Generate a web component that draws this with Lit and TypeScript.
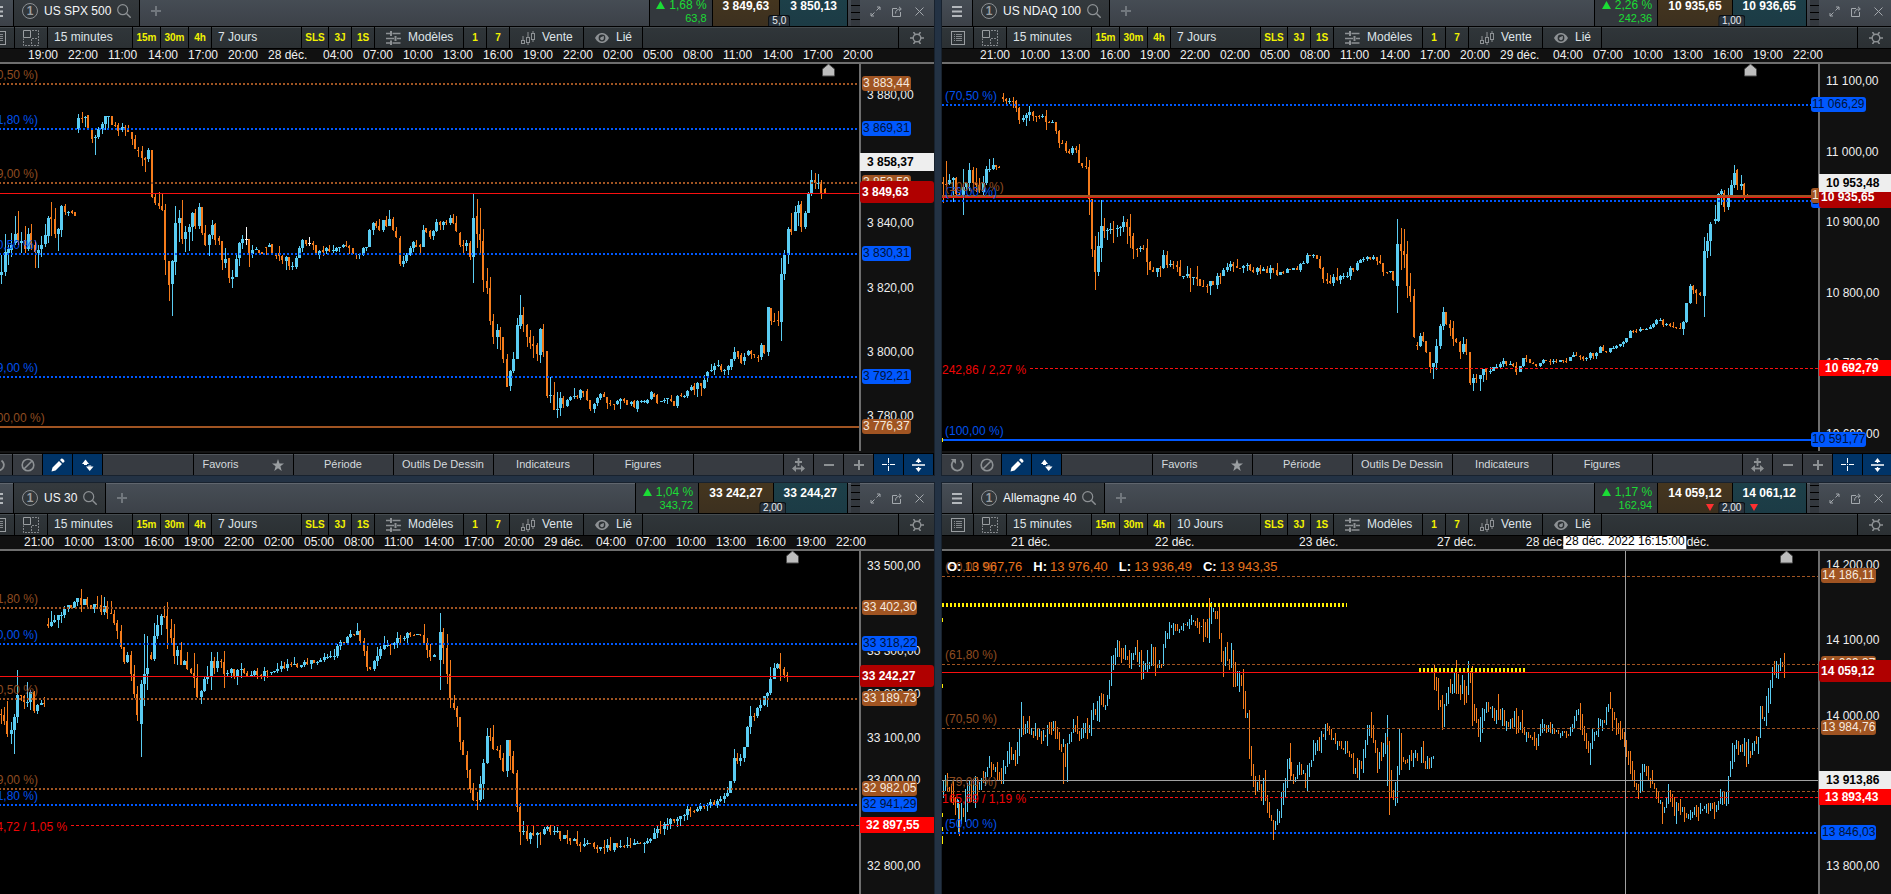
import { LitElement, html, svg, css, nothing } from "lit";
import { customElement, property } from "lit/decorators.js";
import { classMap } from "lit/directives/class-map.js";
import { styleMap } from "lit/directives/style-map.js";

type Tone = "brown" | "blue" | "red" | "grey" | "yellow";
type Kind = "dot" | "solid" | "thin" | "dash" | "thick" | "block";
interface Candle { x: number; hi: number; lo: number; top: number; bot: number; c: string }
interface Level { y: number; tone: Tone; kind: Kind; label?: string; labelY?: number; from?: number; to?: number; tag?: string; inset?: boolean }
interface Tag { y: number; text: string; look: "live" | "white" | "stop" }
interface Panel {
  name: string; change: string; points: string; sell: string; buy: string; spread: string; falling?: boolean;
  range: string; pad: number; times: [string, number][]; ox: number; oy: number;
  candles: Candle[]; thin?: boolean; levels: Level[]; ticks: [number, string][]; tags: Tag[];
  marker: number; cross?: { x: number; y: number; date: string }; ohlc?: [string, string][]; marks?: [number, number][];
}

/* Recorded bars: x high low bodyTop bodyBottom colour, in thirds of a pixel. */
const SPX_BARS = `4 375 462 426 435 b|16 312 438 366 426 b|25 345 405 358 368 b|34 310 382 345 360 b|46 258 345 312 340 b|55 243 345 310 335 o|64 306 370 333 339 b|76 288 370 330 357 o|85 294 362 312 357 b|94 282 360 310 345 o|106 330 414 345 366 o|115 345 414 360 369 b|124 318 381 345 357 b|136 282 351 315 342 b|145 258 339 264 318 b|154 216 318 261 267 o|166 234 324 267 312 o|175 294 363 297 312 b|184 225 321 228 300 b|196 222 255 228 246 o|205 243 258 246 249 b|217 240 252 243 249 o|226 246 258 246 258 o|235 -48 9 -36 -3 b|247 -54 -21 -37 -33 o|256 -42 -9 -40 -36 b|265 -45 0 -45 -5 o|277 0 40 0 27 o|286 15 75 21 24 b|295 -10 27 -3 22 b|307 -24 12 -18 -2 b|316 -42 0 -42 -18 b|325 -42 -4 -41 -38 b|337 -42 -15 -42 -15 o|346 -24 -10 -15 -11 o|355 -22 18 -14 2 o|367 -21 6 -8 0 b|376 -15 18 -8 -3 o|385 -15 7 0 7 o|397 6 45 6 27 o|406 15 57 27 57 o|415 51 81 60 63 o|427 48 108 63 84 o|436 81 126 84 90 o|446 54 96 60 87 b|457 60 204 60 200 o|466 192 225 201 219 o|478 186 237 219 228 o|487 190 243 228 240 o|496 222 435 240 390 o|508 393 513 393 465 o|517 390 558 393 462 b|526 228 435 279 396 b|538 240 336 264 279 b|547 210 342 264 327 o|556 288 366 306 327 b|568 282 363 291 306 b|577 246 333 249 291 b|586 237 297 249 288 o|598 219 297 231 288 b|607 231 315 231 309 o|616 285 348 309 345 o|628 312 378 315 345 b|637 270 327 285 315 b|646 279 345 282 330 o|658 318 345 324 333 o|667 333 420 333 390 o|676 354 414 387 399 b|688 384 459 384 444 o|697 420 474 441 447 b|709 375 441 387 441 b|718 336 408 339 384 b|727 315 357 327 339 b|739 291 345 327 330 w|748 327 411 327 375 o|757 345 384 360 372 b|769 351 360 357 360 b|778 360 369 360 369 o|787 366 372 366 372 o|799 351 375 351 354 o|808 339 351 345 351 b|817 342 375 342 372 o|829 375 387 375 378 o|838 348 393 370 378 o|847 375 402 378 390 o|859 378 420 381 393 b|868 380 420 381 408 o|877 396 420 408 411 b|889 378 417 384 411 b|898 348 384 354 384 b|907 327 366 330 354 b|919 330 348 330 342 o|928 321 348 339 342 w|940 333 360 339 345 o|949 345 372 345 369 o|958 360 387 363 375 b|970 348 378 360 366 o|979 351 372 354 363 b|988 345 366 357 363 o|1000 345 369 360 363 b|1009 351 366 354 363 b|1018 351 366 352 355 b|1030 342 354 345 351 b|1039 333 351 345 348 o|1048 345 372 348 354 o|1060 354 372 354 369 o|1069 372 387 372 375 o|1078 372 387 373 376 b|1090 351 378 354 375 b|1099 350 363 351 354 b|1108 297 351 300 351 b|1120 276 315 279 300 b|1129 273 294 279 288 o|1138 267 303 288 300 o|1150 270 306 270 300 b|1159 258 291 270 288 o|1168 240 288 267 288 b|1180 261 303 267 300 o|1189 291 324 303 321 o|1201 318 408 324 402 o|1210 378 411 393 402 b|1219 369 399 375 393 b|1231 348 378 354 375 b|1240 333 366 336 354 b|1249 330 352 345 351 o|1261 342 369 345 351 o|1270 285 351 300 351 b|1279 294 309 294 306 o|1291 300 327 303 321 o|1300 300 330 303 318 b|1309 267 306 276 303 b|1321 273 300 276 285 o|1330 273 300 276 285 b|1339 270 286 276 280 o|1351 255 285 264 279 b|1360 252 282 264 279 o|1369 258 306 279 303 o|1381 306 351 309 345 o|1390 330 369 345 348 o|1399 330 363 339 348 b|1411 333 390 339 381 o|1420 192 459 264 381 b|1432 207 354 258 312 o|1441 234 369 312 330 o|1450 297 486 333 450 o|1462 414 492 453 474 o|1471 441 585 474 573 o|1480 552 642 573 621 o|1492 582 657 600 621 b|1501 591 660 600 621 o|1510 621 699 621 687 o|1522 672 771 687 771 o|1531 720 783 723 768 b|1540 666 729 687 723 b|1552 564 687 585 687 b|1561 495 597 555 588 b|1570 531 606 555 582 o|1582 582 651 585 621 o|1591 600 657 621 639 o|1600 618 684 642 648 o|1612 639 693 645 672 o|1621 594 699 597 675 b|1630 582 681 597 666 o|1642 663 804 663 798 o|1651 741 819 795 798 b|1663 756 840 795 840 o|1672 786 864 837 840 b|1681 786 858 804 834 b|1690 798 834 804 822 o|1702 807 831 810 828 b|1711 798 813 801 810 b|1723 774 807 798 801 b|1732 795 807 798 801 o|1741 777 810 780 804 b|1750 783 801 783 789 o|1762 777 813 783 810 o|1771 810 843 810 837 o|1783 819 849 822 837 b|1792 801 828 804 819 b|1801 789 810 792 804 b|1813 786 801 793 801 o|1822 801 837 801 819 o|1831 810 828 819 822 o|1843 822 840 822 825 o|1852 810 825 813 822 b|1861 804 837 807 813 b|1873 804 819 807 813 o|1882 810 825 810 825 o|1894 813 828 816 822 b|1903 810 834 813 831 o|1912 810 846 813 837 b|1924 810 819 813 816 b|1933 811 819 813 816 b|1942 807 822 810 819 b|1954 783 810 786 807 b|1963 789 801 792 801 o|1972 792 822 795 819 o|1984 812 817 813 816 b|1993 804 819 810 813 b|2002 804 822 805 808 b|2014 795 816 808 814 o|2023 813 828 813 828 o|2032 795 834 798 828 b|2044 789 801 795 798 o|2053 795 804 798 801 b|2062 780 804 783 798 b|2074 765 783 771 780 b|2083 759 795 768 780 o|2092 756 801 759 777 b|2104 759 798 759 768 o|2113 735 777 750 774 b|2122 723 756 726 738 b|2134 702 726 720 723 b|2143 699 735 708 720 b|2155 690 711 705 708 b|2164 702 726 708 720 o|2173 717 735 719 722 b|2185 705 735 708 720 b|2194 687 720 687 711 b|2203 651 693 666 687 b|2215 663 687 663 681 o|2224 669 702 675 699 o|2233 669 705 681 693 b|2245 660 678 663 675 b|2254 660 687 663 672 o|2263 672 684 672 675 o|2275 675 696 681 684 o|2284 639 690 645 681 b|2293 645 672 645 669 o|2305 531 678 531 666 b|2314 534 585 534 573 o|2323 549 576 573 576 o|2335 543 588 570 573 o|2344 384 633 432 576 b|2353 360 450 375 432 b|2365 291 402 297 375 b|2374 249 315 297 306 o|2386 228 303 246 303 b|2395 213 288 225 249 b|2404 213 306 222 291 o|2416 243 297 249 291 b|2425 186 249 189 249 b|2434 120 198 150 189 b|2446 129 177 150 159 o|2455 132 177 159 162 b|2464 150 207 162 189 o|2476 174 189 177 189 o`;

function recorded(src: string): Candle[] {
  const y = (v: string) => Math.round(130 + Number(v) / 3);
  return src.split("|").map((row) => {
    const [x, hi, lo, top, bot, c] = row.split(" ");
    return { x: Math.floor(Number(x) / 3), hi: y(hi), lo: y(lo), top: y(top), bot: y(bot), c };
  });
}

/* Bars walked along a path of "x,y,swing" points; the swing carries on until changed. */
function walk(src: string, step: number, seed: number): Candle[] {
  let s = seed;
  const rnd = () => ((s = (s * 1103515245 + 12345) % 2147483648) / 2147483648);
  let swing = 3;
  const pts = src.trim().split(/\s+/).map((p) => {
    const [x, y, w] = p.split(",").map(Number);
    if (w) swing = w;
    return { x, y, w: swing };
  });
  const out: Candle[] = [];
  let k = 0;
  let prev = pts[0].y;
  for (let x = pts[0].x; x <= pts[pts.length - 1].x; x += step) {
    while (k < pts.length - 2 && pts[k + 1].x < x) k++;
    const a = pts[k], b = pts[k + 1];
    const t = Math.min(1, (x - a.x) / (b.x - a.x));
    const close = a.y + (b.y - a.y) * t + (rnd() - 0.5) * a.w * 1.6;
    const top = Math.round(Math.min(prev, close)), bot = Math.max(top + 1, Math.round(Math.max(prev, close)));
    out.push({
      x: Math.floor(x), top, bot,
      hi: Math.round(top - rnd() * rnd() * a.w * 2.4), lo: Math.round(bot + rnd() * rnd() * a.w * 2.4),
      c: close > prev ? "o" : "b",
    });
    prev = close;
  }
  return out;
}
const bar = (x: number, hi: number, lo: number, top: number, bot: number, c: string): Candle => ({ x, hi, lo, top, bot, c });
const STEP = 10 / 3;

const NDAQ = [
  ...walk("943,182,12 950,186 958,190 965,180 970,172 975,188 980,190 985,176,7 990,167 995,166,2 1000,167", STEP, 7),
  ...walk("1003,97,5 1007,98 1013,100 1017,110 1020,122 1024,121 1030,112 1036,113 1040,119 1047,120 1053,124 1057,136 1060,142 1066,148 1070,153 1075,146 1078,155,7 1087,168 1090,200 1093,250,9", STEP, 21),
  bar(1095, 236, 290, 250, 272, "o"), bar(1098, 232, 276, 246, 272, "b"), bar(1101, 200, 262, 226, 248, "b"),
  ...walk("1104,226,11 1107,223 1116,229 1124,229 1134,241,8 1146,256 1155,278 1164,258 1182,271,6 1206,284 1215,284 1224,267,4 1254,269 1278,272 1296,268 1308,256 1318,258 1325,284 1333,280 1345,275 1357,265 1371,257,3 1380,260 1384,272 1391,271 1395,286", STEP, 21),
  bar(1397, 219, 313, 244, 286, "b"), bar(1401, 228, 270, 244, 251, "o"), bar(1404, 229, 268, 251, 255, "o"), bar(1407, 241, 298, 254, 286, "o"), bar(1410, 273, 302, 286, 296, "o"), bar(1414, 289, 338, 296, 337, "o"),
  ...walk("1417,345,6 1421,339 1427,350 1431,372 1434,359 1438,347 1441,317 1444,308 1447,322 1451,332 1456,340 1461,351 1465,341 1467,355,5 1470,380 1474,375,6 1478,382 1481,377 1485,369,5 1490,375 1495,367,2 1505,362 1511,365 1517,371 1524,358 1531,363 1538,366 1545,360 1565,362 1575,355 1582,360 1590,355 1597,354 1600,348 1605,352 1612,348 1622,344 1630,332 1640,329 1652,328 1658,318 1663,325,3 1668,326 1675,328 1681,330 1685,317 1690,287 1695,292,5 1701,296", STEP, 5),
  bar(1704, 237, 317, 251, 296, "b"), bar(1707, 233, 258, 241, 251, "b"), bar(1710, 222, 256, 224, 241, "b"), bar(1715, 205, 224, 219, 221, "b"), bar(1718, 193, 222, 194, 221, "b"), bar(1721, 189, 205, 191, 194, "b"), bar(1724, 190, 212, 193, 207, "o"), bar(1728, 188, 210, 196, 207, "b"), bar(1731, 180, 197, 185, 196, "b"), bar(1734, 165, 188, 173, 185, "b"), bar(1737, 169, 190, 170, 185, "o"), bar(1741, 175, 190, 184, 186, "b"), bar(1744, 183, 200, 184, 195, "o"), bar(1747, 194, 198, 195, 197, "o"),
];

const US30 = [
  ...walk("1,714,12 6,732 12,736 16,712 20,694 26,708 31,700 37,706,4 45,705", STEP, 3),
  ...walk("48,624,8 54,616 60,612 70,604 80,600,6 90,608 100,606 109,612 118,630 122,655,9 130,662 133,690 139,720", STEP, 11),
  bar(141, 680, 757, 684, 724, "b"), bar(144, 634, 706, 674, 684, "b"), bar(147, 636, 690, 668, 674, "b"),
  ...walk("151,655,11 154,639 161,621 169,625 175,657 187,661 199,693,9 211,665 229,672,5 259,675,4 283,666 307,663 332,657 344,639,5 358,633 369,669 386,645 404,634 422,633 430,658 437,657", STEP, 17),
  bar(440, 613, 690, 632, 660, "b"), bar(443, 628, 664, 632, 648, "o"), bar(447, 634, 684, 648, 674, "o"), bar(450, 660, 708, 674, 698, "o"),
  ...walk("454,703,8 464,754 473,802 480,790 488,736 496,748 504,768 508,742 512,760 515,784 519,824 524,832 531,836 543,826,5 555,834 567,838,4 579,844 603,848 627,844 645,846 663,826 681,814 705,806 724,798 730,790 733,760,5 743,754 748,721 760,707,6 766,694 774,664 781,669 790,676", STEP, 29),
];

const DAX_EARLY = "10,580,30 19,530 30,570 45,610 60,660 75,610 88,560 98,620 110,560,22 130,530 148,490 160,520 175,510 188,540 200,500 210,455 225,465 239,400 240,370 262,380 280,405,16 290,400 308,420 325,390 340,375 352,405 370,450,28 372,530 380,440 395,380 410,380 427,405 445,365 460,350 480,300 492,310 505,280 512,190 525,145,26 540,170 560,160 572,170 583,150 600,180 614,210 622,170 640,175 658,195 668,170 672,110 680,90,18 695,75 712,98 730,72,10 760,58 780,85,28 800,115 808,50 815,10 825,30 835,90 845,180 857,150 866,185 878,195 888,255,24 900,230 912,320 922,360 930,480 938,550 955,570 970,570 980,610 1000,680 1012,650 1030,570 1045,500,24 1060,520 1080,500,16 1100,550 1110,500 1125,440 1140,430 1157,385 1170,405,12 1185,430 1205,440 1230,460,24 1240,520 1255,500 1265,510 1275,430 1290,390 1300,430,18 1312,490 1330,455 1341,400 1345,540,36 1360,600 1368,620 1376,480 1382,440 1395,480,18 1420,470 1438,490"
  .split(" ").map((p) => p.split(",").map(Number)).map(([x, y, w]) => `${940 + x / 3},${600 + y / 3}${w ? "," + w / 3 : ""}`).join(" ");
const DAX = [
  ...walk(DAX_EARLY, 2, 41),
  bar(958, 800, 832, 815, 826, "b"), bar(1063, 753, 784, 760, 776, "o"), bar(1209, 598, 618, 603, 615, "o"), bar(1211, 602, 622, 603, 615, "b"), bar(1290, 743, 780, 750, 776, "o"), bar(1387, 715, 786, 720, 780, "b"),
  ...walk("1421,760,8 1427,768 1433,756", 2, 4),
  ...walk("1434,677,9 1439,700 1442,724 1446,700 1453,681 1459,684 1464,691 1469,677 1471,703 1479,734 1483,710 1491,715 1498,715,7 1508,726 1514,719 1524,731,5 1536,743 1542,726 1553,734,3 1561,730 1568,738 1574,717,7 1579,715 1583,741 1588,749 1594,731 1604,717 1608,705 1613,722 1619,729 1623,741 1627,762 1631,776 1637,795 1643,767 1651,783 1656,795 1661,807 1668,796 1675,809 1681,807,5 1686,817 1696,812 1704,805 1714,809 1722,790,8 1726,807 1729,771 1734,750 1739,752 1743,745 1746,757 1753,748 1758,736 1759,710 1764,715 1768,686 1771,674,6 1776,672 1780,661 1784,671", 2, 77),
];

const clock = (list: string, gap: number): [string, number][] => list.split(" ").map((t) => (t.endsWith("déc.") ? [t.replace("_", " "), gap] : [t, 40]));
const LATER = "21:00 10:00 13:00 16:00 19:00 22:00 02:00 05:00 08:00 11:00 14:00 17:00 20:00 29_déc. 04:00 07:00 10:00 13:00 16:00 19:00 22:00";

const PANELS: Panel[] = [
  {
    name: "US SPX 500", change: "1,68 %", points: "63,8", sell: "3 849,63", buy: "3 850,13", spread: "5,0", range: "7 Jours",
    pad: 45, times: clock("19:00 22:00 11:00 14:00 17:00 20:00 28_déc. 04:00 07:00 10:00 13:00 16:00 19:00 22:00 02:00 05:00 08:00 11:00 14:00 17:00 20:00", 55),
    ox: -17, oy: 64, candles: recorded(SPX_BARS), marker: 828,
    levels: [
      { y: 84, tone: "brown", kind: "dot", label: "(70,50 %)", tag: "3 883,44" }, { y: 129, tone: "blue", kind: "dot", label: "(61,80 %)", tag: "3 869,31" },
      { y: 183, tone: "brown", kind: "dot", label: "(79,00 %)", tag: "3 852,50" }, { y: 193, tone: "red", kind: "thin" },
      { y: 254, tone: "blue", kind: "dot", label: "(70,50 %)", tag: "3 830,31" }, { y: 377, tone: "blue", kind: "dot", label: "(79,00 %)", tag: "3 792,21" },
      { y: 427, tone: "brown", kind: "solid", label: "(100,00 %)", tag: "3 776,37" },
    ],
    ticks: [[95, "3 880,00"], [223, "3 840,00"], [288, "3 820,00"], [352, "3 800,00"], [416, "3 780,00"]],
    tags: [{ y: 192, text: "3 849,63", look: "live" }, { y: 162, text: "3 858,37", look: "white" }],
  },
  {
    name: "US NDAQ 100", change: "2,26 %", points: "242,36", sell: "10 935,65", buy: "10 936,65", spread: "1,00", range: "7 Jours",
    pad: 38, times: clock(LATER, 53), ox: 942, oy: 64, candles: NDAQ, marker: 1750,
    levels: [
      { y: 105, tone: "blue", kind: "dot", label: "(70,50 %)", tag: "11 066,29", inset: true }, { y: 201, tone: "blue", kind: "dot", label: "(79,00 %)", tag: "10 930,09", inset: true },
      { y: 196, tone: "brown", kind: "thick", label: "(100,00 %)", tag: "10 936,42", inset: true }, { y: 197, tone: "red", kind: "thin" },
      { y: 368, tone: "red", kind: "dash", label: "242,86 / 2,27 %", labelY: 370, from: 88 }, { y: 440, tone: "blue", kind: "solid", label: "(100,00 %)", tag: "10 591,77", inset: true },
    ],
    ticks: [[81, "11 100,00"], [152, "11 000,00"], [222, "10 900,00"], [293, "10 800,00"], [363, "10 700,00"], [434, "10 600,00"]],
    tags: [{ y: 197, text: "10 935,65", look: "live" }, { y: 183, text: "10 953,48", look: "white" }, { y: 368, text: "10 692,79", look: "stop" }],
    marks: [[438, 4]],
  },
  {
    name: "US 30", change: "1,04 %", points: "343,72", sell: "33 242,27", buy: "33 244,27", spread: "2,00", range: "7 Jours",
    pad: 41, times: clock(LATER, 52), ox: -17, oy: 551, candles: US30, marker: 792,
    levels: [
      { y: 608, tone: "brown", kind: "dot", label: "(61,80 %)", tag: "33 402,30" }, { y: 644, tone: "blue", kind: "dot", label: "(50,00 %)", tag: "33 318,22" },
      { y: 676, tone: "red", kind: "thin" }, { y: 699, tone: "brown", kind: "dot", label: "(70,50 %)", tag: "33 189,73" },
      { y: 789, tone: "brown", kind: "dot", label: "(79,00 %)", tag: "32 982,05" }, { y: 805, tone: "blue", kind: "dot", label: "(61,80 %)", tag: "32 941,29" },
      { y: 825, tone: "red", kind: "dash", label: "344,72 / 1,05 %", labelY: 827, from: 88 },
    ],
    ticks: [[566, "33 500,00"], [651, "33 300,00"], [694, "33 200,00"], [738, "33 100,00"], [780, "33 000,00"], [866, "32 800,00"]],
    tags: [{ y: 676, text: "33 242,27", look: "live" }, { y: 825, text: "32 897,55", look: "stop" }],
  },
  {
    name: "Allemagne 40", change: "1,17 %", points: "162,94", sell: "14 059,12", buy: "14 061,12", spread: "2,00", falling: true, range: "10 Jours",
    pad: 69, times: [["21 déc.", 144], ["22 déc.", 144], ["23 déc.", 138], ["27 déc.", 89], ["28 déc.", 144], ["29 déc.", 50]],
    ox: 942, oy: 551, candles: DAX, thin: true, marker: 1786,
    levels: [
      { y: 576, tone: "brown", kind: "dash", label: "(50,00 %)", tag: "14 186,11" }, { y: 664, tone: "brown", kind: "dash", label: "(61,80 %)", tag: "14 069,37" },
      { y: 672, tone: "red", kind: "thin" }, { y: 728, tone: "brown", kind: "dash", label: "(70,50 %)", tag: "13 984,76" },
      { y: 791, tone: "brown", kind: "dash", label: "(79,00 %)" }, { y: 797, tone: "red", kind: "dash", label: "165,69 / 1,19 %", labelY: 799, from: 88 },
      { y: 833, tone: "blue", kind: "dot", label: "(50,00 %)", tag: "13 846,03" },
      { y: 605, tone: "yellow", kind: "block", from: 0, to: 405 }, { y: 670, tone: "yellow", kind: "block", from: 477, to: 583 },
    ],
    ticks: [[565, "14 200,00"], [640, "14 100,00"], [716, "14 000,00"], [866, "13 800,00"]],
    tags: [{ y: 671, text: "14 059,12", look: "live" }, { y: 780, text: "13 913,86", look: "white" }, { y: 797, text: "13 893,43", look: "stop" }],
    cross: { x: 1625, y: 780, date: "28 déc. 2022 16:15:00" },
    ohlc: [["O:", "13 967,76"], ["H:", "13 976,40"], ["L:", "13 936,49"], ["C:", "13 943,35"]],
    marks: [[618, 4], [684, 4], [813, 4], [827, 4], [836, 8]],
  },
];

const icon = (w: number, h: number, body: unknown) => html`<svg class="icon" width=${w} height=${h} viewBox="0 0 ${w} ${h}" fill="none" stroke="currentColor" aria-hidden="true">${body}</svg>`;
const ICONS = {
  menu: icon(10, 11, svg`<path d="M0 1h10M0 5.5h10M0 10h10" stroke-width="2"/>`),
  search: icon(14, 14, svg`<circle cx="5.700" cy="5.700" r="5" stroke-width="1.2"/><path d="M9.500 9.500l4.200 4.200" stroke-width="1.4"/>`),
  plus: icon(10, 10, svg`<path d="M5 0v10M0 5h10" stroke-width="2"/>`),
  minus: icon(10, 10, svg`<path d="M0 5h10" stroke-width="2"/>`),
  list: icon(14, 14, svg`<rect x="0.5" y="0.5" width="13" height="13"/><path d="M3 3.5h1M5 3.5h6M3 5.500h1M5 5.500h6M3 7.500h1M5 7.500h6M3 9.500h1M5 9.500h6" opacity=".8"/>`),
  grid: icon(16, 16, svg`<path d="M.5 .5h7v7h-7z"/><path d="M9 .5h6.500v15h-15v-7M8.500 9v6M9 8.500h6" stroke-dasharray="2 1" opacity=".8"/>`),
  sliders: icon(15, 14, svg`<path d="M0 2.500h4M6.500 2.500h8M0 7.500h8M11 7.500h4M0 12h4M6.500 12h8" stroke-width="1.500"/><path d="M5 0v5M9.500 5v5M5 9.500v4.500" stroke-width="2"/>`),
  candles: icon(14, 14, svg`<rect x=".5" y="9.500" width="3" height="3"/><rect x="5.500" y="6.500" width="3" height="5"/><rect x="10.500" y="2.500" width="3" height="6"/><path d="M2 5v4M7 1v5M7 12v2M12 0v2M12 9v2"/>`),
  eye: icon(14, 10, svg`<path d="M0 5C2 1 5 0 7 0s5 1 7 5c-2 4-5 5-7 5s-5-1-7-5z" fill="currentColor" stroke="none"/><circle cx="7" cy="5" r="3.400" fill="#2d3235" stroke="none"/><circle cx="7" cy="5.500" r="1.800" fill="currentColor" stroke="none"/><path d="M7 3.200h2v2z" fill="currentColor" stroke="none"/>`),
  gear: icon(14, 12, svg`<circle cx="7" cy="6" r="3.800" stroke-width="1.400"/><path d="M0 6h3M11 6h3M3.500 0l2 3M10.500 0l-2 3M3.500 12l2-3M10.500 12l-2-3" stroke-width="1.500"/>`),
  expand: icon(11, 11, svg`<path d="M7 1h3v3M10 1L6.500 4.500M4 10H1V7M1 10l3.500-3.500"/>`),
  popout: icon(10, 11, svg`<path d="M5 2.500H.5v8h8V6M3.500 7.500c0-3 2-4.500 5-4.500M7 .8l2.300 2.200L7 5.200"/>`),
  close: icon(9, 9, svg`<path d="M.5 .5l8 8M8.500 .5l-8 8"/>`),
  refresh: icon(14, 14, svg`<path d="M10.500 2.400A5.600 5.600 0 1 1 3.500 2.800" stroke-width="1.800"/><path d="M.8 1h5.200v5z" fill="currentColor" stroke="none"/>`),
  ban: icon(14, 14, svg`<circle cx="7" cy="7" r="5.800" stroke-width="1.600"/><path d="M3.200 10.800l7.600-7.600" stroke-width="1.600"/>`),
  pencil: icon(14, 14, svg`<path d="M0.500 13.500l1-4L8 3l3 3-6.500 6.500zM9 2l1.500-1.500c.8-.7 3.700 2.100 3 3L12 5z" fill="currentColor" stroke="none"/>`),
  updown: icon(12, 12, svg`<path d="M0 5l3.500-4.500L7 5z" fill="currentColor" stroke="none"/><path d="M4 7.500h7.500L7.700 12z" fill="currentColor" stroke="none"/><path d="M3.500 5v1M7.700 6.500v1" stroke-width="3"/>`),
  star: icon(12, 12, svg`<path d="M6 0l1.500 4.400H12L8.400 7.200 9.700 12 6 9.200 2.300 12l1.300-4.800L0 4.400h4.500z" fill="currentColor" stroke="none"/>`),
  scale: icon(13, 14, svg`<path d="M6.500 0v8M3 4h7" stroke-width="1.800"/><path d="M1.500 10.500h10" stroke-width="1.800"/><path d="M4 7v7L0 10.500zM9 7v7l4-3.500z" fill="currentColor" stroke="none"/>`),
  cross: icon(13, 13, svg`<path d="M6.500 0v5M6.500 8v5M0 6.500h5M8 6.500h5M6 6.500h1"/>`),
  fit: icon(13, 14, svg`<path d="M0 7h13M6.500 2v3M6.500 9v3" stroke-width="1.400"/><path d="M3.500 4l3-4 3 4zM3.500 10l3 4 3-4z" fill="currentColor" stroke="none"/>`),
};

@customElement("price-chart")
class PriceChart extends LitElement {
  @property({ attribute: false }) data!: Panel;

  static styles = css`
    :host { display: grid; grid-template-columns: minmax(0, 1fr) 73px; min-height: 0; font: 12px/15px "Liberation Sans", Arial, sans-serif; border-bottom: 2px solid #141414; }
    .plot { position: relative; overflow: hidden; background: #000; border-right: 2px solid #6e6e6e; }
    .canvas { position: absolute; inset: 0; width: 100%; height: 100%; shape-rendering: crispEdges; }
    .b { fill: #5accf2; } .o { fill: #f47c1c; } .w { fill: #f4f4f4; }
    .line { fill: none; }
    .brown { stroke: #a05422; } .blue { stroke: #0058ff; } .red { stroke: #f81010; } .yellow { stroke: #ffee00; } .grey { stroke: #a0a0a0; }
    .marks { fill: #ffee00; }
    .label { position: absolute; left: 3px; white-space: pre; }
    .label.flush { left: 0; }
    .label.t-brown { color: #8f4c20; } .label.t-blue { color: #0052ec; } .label.t-red { color: #ee0606; }
    .home { position: absolute; top: 0; width: 13px; height: 13px; }
    .ohlc { position: absolute; top: 8px; left: 5px; display: flex; margin: 0; font-size: 13px; line-height: 16px; white-space: pre; }
    .pair { display: flex; gap: 3px; margin-right: 11px; }
    dt { color: #fff; font-weight: bold; } dd { margin: 0; color: #e8741e; }
    .scale { position: relative; background: #111; color: #eee; }
    .tick, .tag, .box { position: absolute; white-space: pre; }
    .tick { left: 6px; }
    .tag { left: 1px; padding: 0 1px; border-radius: 3px; }
    .tag.inset { left: -9px; }
    .tag.t-brown { background: #a05422; color: #f6e9df; } .tag.t-blue { background: #0058ff; color: #001238; }
    .box { left: -1px; right: 0; font-weight: bold; box-sizing: border-box; }
    .live { height: 22px; line-height: 22px; padding-left: 2px; background: #b00000; color: #fff; border-radius: 3px; }
    .white { height: 18px; line-height: 18px; padding-left: 7px; background: #eee; color: #000; }
    .stop { height: 16px; line-height: 16px; padding-left: 6px; background: #f00; color: #fff; }
  `;

  private shapes(c: string) {
    const { ox, oy, candles, thin } = this.data;
    return candles.filter((k) => k.c === c).map((k) => {
      const x = k.x - ox;
      const wick = `M${x} ${k.hi - oy}h1V${Math.max(k.lo, k.hi + 1) - oy}h-1z`;
      const wide = c === "o" ? 2 : 3;
      return thin ? wick : `${wick}M${x - 1} ${k.top - oy}h${wide}V${Math.max(k.bot, k.top + 1) - oy}h-${wide}z`;
    }).join("");
  }

  private line(l: Level) {
    const weight = { dot: 2, solid: 2, thin: 1, dash: 1, thick: 3, block: 4 }[l.kind];
    const dash = { dot: "2 2", solid: "none", thin: "none", dash: "3 2", thick: "none", block: "2 2" }[l.kind];
    const y = l.y - this.data.oy + (weight % 2 ? 0.5 : 0);
    return svg`<line class="line ${l.tone}" x1=${l.from ?? 0} x2=${l.to ?? "100%"} y1=${y} y2=${y} stroke-width=${weight} stroke-dasharray=${dash} />`;
  }

  render() {
    const { ox, oy, levels, ticks, tags, marker, cross, ohlc, marks } = this.data;
    const top = (y: number, h: number) => styleMap({ top: `${y - oy - Math.floor(h / 2)}px` });
    return html`
      <div class="plot">
        <svg class="canvas" role="img" aria-label="Graphique ${this.data.name}">
          ${["b", "o", "w"].map((c) => svg`<path class=${c} d=${this.shapes(c)} />`)}
          ${levels.map((l) => this.line(l))}
          ${(marks ?? []).map(([y, h]) => svg`<rect class="marks" x="0" y=${y - oy} width="1" height=${h} />`)}
          ${cross ? svg`<line class="grey" x1="0" x2="100%" y1=${cross.y - oy + 0.5} y2=${cross.y - oy + 0.5} /><line class="grey" x1=${cross.x - ox + 0.5} x2=${cross.x - ox + 0.5} y1="0" y2="100%" />` : nothing}
        </svg>
        ${levels.filter((l) => l.label).map((l) => html`<span class=${classMap({ label: true, flush: !!l.labelY, ["t-" + l.tone]: true })} style=${top(l.labelY ?? l.y - 9, 15)}>${l.label}</span>`)}
        ${ohlc ? html`<dl class="ohlc">${ohlc.map(([k, v]) => html`<div class="pair"><dt>${k}</dt><dd>${v}</dd></div>`)}</dl>` : nothing}
        <svg class="home" style=${styleMap({ left: `${marker - ox - 6}px` })} viewBox="0 0 13 13"><path d="M6.500 0L12.500 5V12H.5V5z" fill="#bdbdbd" stroke="#4a4a4a" /></svg>
      </div>
      <div class="scale">
        ${ticks.map(([y, t]) => html`<span class="tick" style=${top(y, 15)}>${t}</span>`)}
        ${levels.filter((l) => l.tag).map((l) => html`<span class=${classMap({ tag: true, inset: !!l.inset, ["t-" + l.tone]: true })} style=${top(l.y - 1, 15)}>${l.tag}</span>`)}
        ${tags.map((t) => html`<span class="box ${t.look}" style=${top(t.y, { live: 22, white: 18, stop: 16 }[t.look])}>${t.text}</span>`)}
      </div>`;
  }
}

@customElement("chart-panel")
class ChartPanel extends LitElement {
  @property({ attribute: false }) data!: Panel;

  static styles = css`
    :host { display: grid; grid-template-rows: 31px 22px 15px minmax(0, 1fr) 22px; min-width: 0; min-height: 0; background: #000; color: #dfe4e8; font: 12px/15px "Liberation Sans", Arial, sans-serif; }
    button { display: flex; align-items: center; justify-content: center; box-sizing: border-box; margin: 0; padding: 0; border: 0; background: none; color: inherit; font: inherit; white-space: nowrap; cursor: pointer; }
    .icon { flex: none; display: block; }
    .head, .tools, .foot { display: flex; min-width: 0; }
    .head { border-bottom: 1px solid #000; background: linear-gradient(#474e56, #3c4148); box-shadow: inset 0 1px #60666e; }
    .menu { width: 31px; border-right: 1px solid #000; color: #b4b8bc; }
    .tab { display: flex; align-items: center; gap: 6px; padding: 0 8px; border-right: 1px solid #000; background: linear-gradient(#353a3e, #2d3235); color: #f4f6f8; white-space: nowrap; }
    .num { width: 14px; height: 14px; border: 1px solid #8d9194; border-radius: 50%; color: #9a9ea1; font-weight: bold; line-height: 14px; text-align: center; }
    .find { color: #8d9194; }
    .new { width: 31px; color: #71777d; }
    .space { flex: 1; }
    .change { width: 63px; box-sizing: border-box; padding: 2px 5px 0 0; border-left: 1px solid #000; background: #33383d; color: #1bdc35; font-size: 11px; line-height: 13px; text-align: right; }
    .pct { display: flex; justify-content: flex-end; align-items: center; gap: 4px; font-size: 12px; line-height: 14px; }
    .quotes { position: relative; display: grid; grid-template-columns: 1fr 1fr; border-right: 1px solid #000; }
    .quote { align-items: flex-start; padding: 3px 10px 0; border-left: 1px solid #000; color: #fff; font-weight: bold; }
    .sell { background: linear-gradient(#45361f, #3c301f); } .buy { background: linear-gradient(#1d4049, #1c3b45); }
    .spread { position: absolute; left: 50%; bottom: 0; transform: translateX(-50%); padding: 0 3px; border: 1px solid #0a0f14; border-bottom: 0; border-radius: 3px 3px 0 0; background: #28323c; color: #e8ecef; font-size: 10px; line-height: 10px; }
    .drop { position: absolute; bottom: 2px; }
    .drop.l { left: calc(50% - 26px); } .drop.r { right: calc(50% - 26px); }
    .grip { width: 9px; margin: 0 4px 0 3px; background: repeating-linear-gradient(transparent 0 2px, #000 2px 3px, transparent 3px 7px), #33383e; }
    .win { width: 22px; color: #a3a8ad; }
    .wins { display: flex; padding-right: 4px; }
    .tools { border-bottom: 1px solid #000; background: linear-gradient(#30363a, #2b3033); box-shadow: inset 0 1px #454b4f; }
    .tools > * { border-right: 1px solid #000; }
    .tools > .gear { width: 35px; border-right: 0; color: #8d9194; }
    .list { width: 32px; color: #9a9ea1; } .grid { width: 33px; color: #9a9ea1; }
    .pick { width: 85px; justify-content: flex-start; padding-left: 6px; }
    .range { width: 90px; }
    .fast { width: 23px; color: #f2f200; font-size: 10px; font-weight: bold; }
    .mid { width: 28px; } .sls { width: 27px; }
    .named { gap: 7px; justify-content: flex-start; padding-left: 11px; }
    .named .icon { color: #8d9194; }
    .models { width: 89px; } .sale { width: 74px; } .link { width: 59px; }
    .times { position: relative; display: flex; box-sizing: border-box; overflow: hidden; border-bottom: 2px solid #6e6e6e; background: #111; color: #f0f0f0; line-height: 13px; }
    .time { flex: none; white-space: nowrap; }
    .stamp { position: absolute; top: 0; transform: translateX(-50%); height: 13px; padding: 0 2px; background: #fff; color: #000; line-height: 11px; white-space: nowrap; }
    .foot { box-sizing: border-box; border-top: 1px solid #000; background: #373b41; box-shadow: inset 0 1px #50555b; font-size: 11px; }
    .foot > * { border-right: 1px solid #000; }
    .small { width: 30px; color: #8d9194; }
    .on { background: #003468; color: #fff; }
    .wide { width: 100px; color: #d5dade; }
    .fav { justify-content: space-between; padding: 0 9px; }
    .fav .icon { color: #9a9ea1; }
  `;

  render() {
    const p = this.data;
    const fast = (t: string, extra = "") => html`<button class="fast ${extra}">${t}</button>`;
    const small = (i: unknown, name: string, on = false) => html`<button class=${classMap({ small: true, on })} aria-label=${name}>${i}</button>`;
    const fall = (side: string) => html`<svg class="drop ${side}" width="8" height="7" viewBox="0 0 8 7"><path d="M0 0h8L4 7z" fill="#ff3030" /></svg>`;
    return html`
      <header class="head">
        <button class="menu" aria-label="Menu">${ICONS.menu}</button>
        <div class="tab"><span class="num">1</span><span>${p.name}</span><button class="find" aria-label="Rechercher">${ICONS.search}</button></div>
        <button class="new" aria-label="Ajouter un onglet">${ICONS.plus}</button>
        <span class="space"></span>
        <div class="change"><div class="pct"><svg width="9" height="8" viewBox="0 0 9 8"><path d="M4.500 0L9 8H0z" fill="#1bdc35" /></svg>${p.change}</div>${p.points}</div>
        <div class="quotes">
          <button class="quote sell">${p.sell}</button><button class="quote buy">${p.buy}</button>
          <span class="spread">${p.spread}</span>${p.falling ? [fall("l"), fall("r")] : nothing}
        </div>
        <span class="grip"></span>
        <div class="wins">
          <button class="win" aria-label="Agrandir">${ICONS.expand}</button><button class="win" aria-label="Détacher">${ICONS.popout}</button><button class="win" aria-label="Fermer">${ICONS.close}</button>
        </div>
      </header>
      <nav class="tools">
        <button class="list" aria-label="Liste">${ICONS.list}</button><button class="grid" aria-label="Disposition">${ICONS.grid}</button>
        <button class="pick">15 minutes</button>${fast("15m", "mid")}${fast("30m", "mid")}${fast("4h")}
        <button class="pick range">${p.range}</button>${fast("SLS", "sls")}${fast("3J")}${fast("1S")}
        <button class="named models">${ICONS.sliders}Modèles</button>${fast("1")}${fast("7")}
        <button class="named sale">${ICONS.candles}Vente</button><button class="named link">${ICONS.eye}Lié</button>
        <span class="space"></span><button class="gear" aria-label="Réglages">${ICONS.gear}</button>
      </nav>
      <div class="times" style=${styleMap({ paddingLeft: `${p.pad}px` })}>
        ${p.times.map(([t, w]) => html`<span class="time" style=${styleMap({ width: `${w}px` })}>${t}</span>`)}
        ${p.cross ? html`<span class="stamp" style=${styleMap({ left: `${p.cross.x - p.ox}px` })}>${p.cross.date}</span>` : nothing}
      </div>
      <price-chart .data=${p}></price-chart>
      <footer class="foot">
        ${small(ICONS.refresh, "Actualiser")}${small(ICONS.ban, "Effacer")}${small(ICONS.pencil, "Dessiner", true)}${small(ICONS.updown, "Ordres", true)}
        <span class="space"></span>
        <button class="wide fav">Favoris${ICONS.star}</button><button class="wide">Période</button><button class="wide">Outils De Dessin</button><button class="wide">Indicateurs</button><button class="wide">Figures</button>
        <span class="space"></span>
        ${small(ICONS.scale, "Échelle")}${small(ICONS.minus, "Dézoomer")}${small(ICONS.plus, "Zoomer")}${small(ICONS.cross, "Réticule", true)}${small(ICONS.fit, "Ajuster", true)}
      </footer>`;
  }
}

@customElement("app-root")
class AppRoot extends LitElement {
  static styles = css`
    :host { display: block; height: 100vh; overflow: hidden; background: #233244; }
    .desk { display: grid; grid-template: minmax(0, 1fr) minmax(0, 1fr) / minmax(0, 1fr) minmax(0, 1fr); gap: 8px; height: calc(100% + 72px); margin: -4px -2px 0 -17px; }
    .pane { outline: 1px solid #18222e; }
  `;
  render() {
    return html`<main class="desk">${PANELS.map((p) => html`<chart-panel class="pane" .data=${p}></chart-panel>`)}</main>`;
  }
}
